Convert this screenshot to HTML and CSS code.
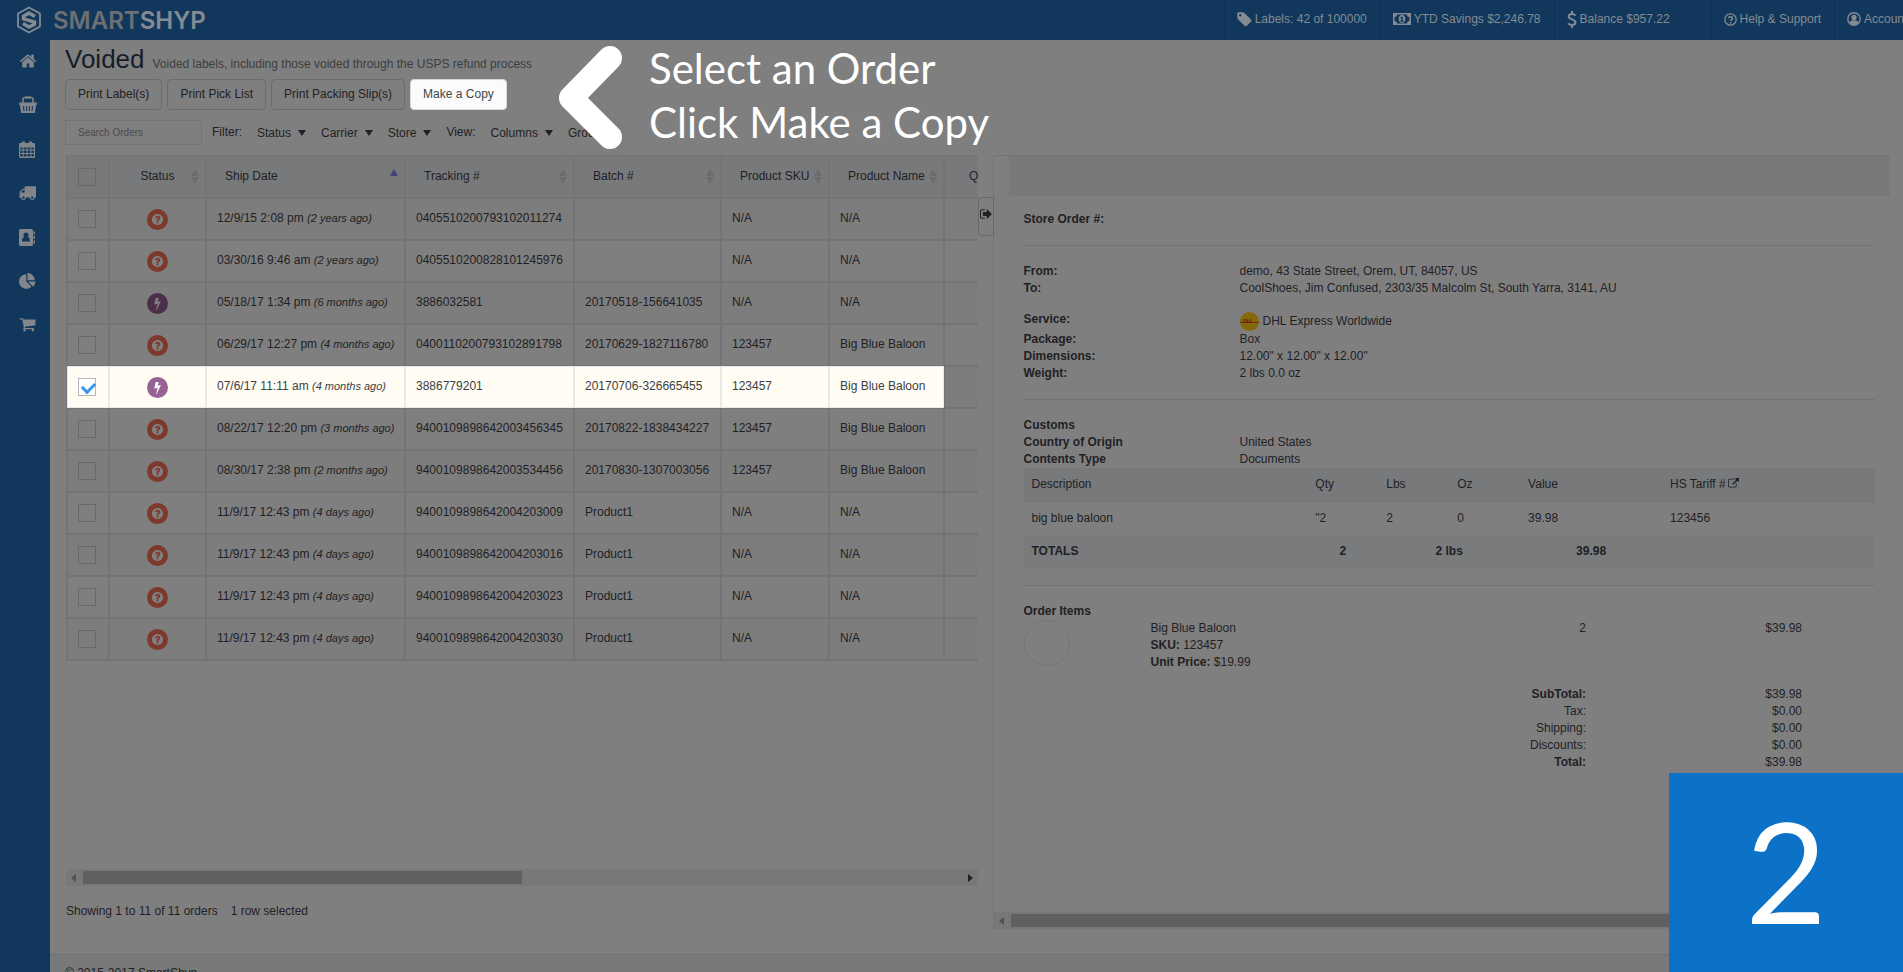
FILE: index.html
```html
<!DOCTYPE html>
<html lang="en">
<head>
    <meta charset="UTF-8">
    <meta name="viewport" content="width=device-width, initial-scale=1.0">
    <title>SmartShyp - Voided</title>
    <link rel="stylesheet" href="styles.css">
</head>
<body>

    <!-- Shared icons -->
    <svg class="symbols" aria-hidden="true">
        <symbol id="question" viewBox="0 0 1792 1792"><path d="M1024 1376v-192q0-14-9-23t-23-9h-192q-14 0-23 9t-9 23v192q0 14 9 23t23 9h192q14 0 23-9t9-23zm256-672q0-88-55.5-163t-138.5-116-170-41q-243 0-371 213-15 24 8 42l132 100q7 6 19 6 16 0 25-12 53-68 86-92 34-24 86-24 48 0 85.5 26t37.5 59q0 38-20 61t-68 45q-63 28-115.5 86.5t-52.5 125.5v36q0 14 9 23t23 9h192q14 0 23-9t9-23q0-19 21.5-49.5t54.5-49.5q32-18 49-28.5t46-35 44.5-48 28-60.5 12.5-81zm384 192q0 209-103 385.5t-279.5 279.5-385.5 103-385.5-103-279.5-279.5-103-385.5 103-385.5 279.5-279.5 385.5-103 385.5 103 279.5 279.5 103 385.5z"/></symbol>
        <symbol id="bolt" viewBox="0 0 1792 1792"><path d="M1333 566q18 20 7 44l-540 1157q-13 25-42 25-4 0-14-2-17-5-25.5-19t-4.5-30l197-808-406 101q-4 1-12 1-18 0-31-11-18-15-13-39l201-825q4-14 16-23t28-9h328q19 0 32 12.5t13 29.5q0 8-5 18l-171 463 396-98q8-2 12-2 19 0 34 15z"/></symbol>
    </svg>

    <!-- Top bar -->
    <header class="topbar">
        <a class="logo" href="#">
            <svg width="26" height="28" viewBox="0 0 26 28" fill="none" stroke="currentColor">
                <path d="M13 1.5 24 7.5v13L13 26.5 2 20.500v-13z" stroke-width="1.800" stroke-linejoin="round"/>
                <path d="M19 10.500 13 7 7.500 10.200v2.600l11 3.200v2.300L13 21l-6-3.500" stroke-width="3.400"/>
            </svg>
            <span class="logo-text">SMART<b>SHYP</b></span>
        </a>
        <nav class="topnav">
            <a href="#">
                <svg width="15" height="15" viewBox="100 100 1600 1600"><path d="M576 448q0-53-37.500-90.500t-90.500-37.500-90.500 37.500-37.500 90.500 37.500 90.500 90.500 37.500 90.500-37.500 37.500-90.500zm1067 576q0 53-37 90l-491 492q-39 37-91 37-53 0-90-37l-715-716q-38-37-64.500-101t-26.500-117v-416q0-52 38-90t90-38h416q53 0 117 26.500t102 64.500l715 714q37 39 37 91z"/></svg>
                Labels: 42 of 100000
            </a>
            <a href="#">
                <svg width="18" height="12" viewBox="0 0 18 12"><path fill-rule="evenodd" d="M0 0h18v12H0zM4 1.500A2.500 2.500 0 0 1 1.500 4v4A2.500 2.500 0 0 1 4 10.500h10A2.500 2.500 0 0 1 16.500 8V4A2.500 2.500 0 0 1 14 1.500zM9 2c2.200 0 3.300 1.800 3.300 4S11.200 10 9 10 5.700 8.200 5.700 6 6.800 2 9 2zm-.6 1.700-1.400 1 .5.8.7-.4v2.600H7.200v1h3.600v-1h-1v-4z"/></svg>
                YTD Savings $2,246.78
            </a>
            <a class="balance" href="#">
                <svg width="10" height="17" viewBox="0 0 10 17" fill="none" stroke="currentColor" stroke-width="2"><path d="M8.500 4.600C7.500 3.400 6 3 5 3 3 3 1.700 4 1.700 5.500c0 3.600 6.800 2.200 6.800 5.800 0 1.700-1.500 2.700-3.500 2.700-1.500 0-2.900-.6-3.800-1.700M5 0v3m0 11v3"/></svg>
                Balance $957.22
            </a>
            <a href="#">
                <svg width="13" height="13" viewBox="0 0 13 13" fill="none" stroke="currentColor"><circle cx="6.500" cy="6.500" r="5.700" stroke-width="1.300"/><path d="M4.500 5.200c.2-2 4-2 4 0 0 1.400-1.900 1.300-1.900 2.800m0 1v1.400" stroke-width="1.500"/></svg>
                Help &amp; Support
            </a>
            <a class="account" href="#">
                <svg width="14" height="14" viewBox="0 0 14 14"><circle cx="7" cy="7" r="6.200" fill="none" stroke="currentColor" stroke-width="1.400"/><circle cx="7" cy="5.400" r="2.600"/><path d="M2.500 11C3 8.800 4.500 8.300 7 8.300s4 .5 4.500 2.700L9 13H5z"/></svg>
                Account
            </a>
        </nav>
    </header>

    <div class="layout">
        <!-- Side menu -->
        <nav class="sidebar">
            <a href="#" aria-label="Home"><svg width="18" height="18" viewBox="0 0 1792 1792"><path d="M1472 992v480q0 26-19 45t-45 19h-384v-384h-256v384h-384q-26 0-45-19t-19-45v-480q0-1 .5-3t.5-3l575-474 575 474q1 2 1 6zm223-69l-62 74q-8 9-21 11h-3q-13 0-21-7l-692-577-692 577q-12 8-24 7-13-2-21-11l-62-74q-8-10-7-23.500t11-21.500l719-599q32-26 76-26t76 26l244 204v-195q0-14 9-23t23-9h192q14 0 23 9t9 23v408l219 182q10 8 11 21.500t-7 23.500z"/></svg></a>
            <a href="#" aria-label="Orders"><svg width="18" height="18" viewBox="0 0 18 18"><path d="M4 8V3.500Q4 1.500 6 1.500h6q2 0 2 2V8" fill="none" stroke="currentColor" stroke-width="1.500"/><path d="M6 .5h6v2H6z"/><path fill-rule="evenodd" d="M0 6.500h18v2.200h-.8L15.800 17H2.200L.8 8.700H0zM4 10l.5 5h1L5 10zm3 0 .2 5h1L8 10zm3 0-.2 5h1l.2-5zm3 0-.5 5h1l.5-5z"/></svg></a>
            <a href="#" aria-label="Calendar"><svg width="16" height="17" viewBox="0 0 16 17"><path fill-rule="evenodd" d="M1 2h2V.5h3V2h4V.5h3V2h2q1 0 1 1v13q0 1-1 1H1q-1 0-1-1V3q0-1 1-1zm.2 4.500v2h2.400v-2zm3.400 0v2h2.900v-2zm3.900 0v2h2.900v-2zm3.900 0v2h2.400v-2zM1.200 9.500V12h2.400V9.500zm3.400 0V12h2.900V9.500zm3.900 0V12h2.900V9.500zm3.900 0V12h2.400V9.500zM1.200 13v2.500h2.400V13zm3.400 0v2.500h2.900V13zm3.900 0v2.500h2.900V13zm3.900 0v2.500h2.400V13z"/></svg></a>
            <a href="#" aria-label="Shipping"><svg width="17" height="17" viewBox="64 128 1728 1728"><path d="M640 1408q0-52-38-90t-90-38-90 38-38 90 38 90 90 38 90-38 38-90zm-384-512h384v-256h-158q-13 0-22 9l-195 195q-9 9-9 22v30zm1280 512q0-52-38-90t-90-38-90 38-38 90 38 90 90 38 90-38 38-90zm256-1088v1024q0 15-4 26.500t-13.500 18.500-16.500 11.500-23.500 6-22.500 2-25.500 0-22.500-.5q0 106-75 181t-181 75-181-75-75-181h-384q0 106-75 181t-181 75-181-75-75-181h-64q-3 0-22.500.5t-25.500 0-22.500-2-23.500-6-16.500-11.500-13.500-18.500-4-26.500q0-26 19-45t45-19v-320q0-8-.5-35t0-38 2.500-34.500 6.500-37 14-30.500 22.500-30l198-198q19-19 50.500-32t58.500-13h160v-192q0-26 19-45t45-19h1024q26 0 45 19t19 45z"/></svg></a>
            <a href="#" aria-label="Contacts"><svg width="16" height="17" viewBox="0 0 16 17"><path fill-rule="evenodd" d="M1.500 0h11Q14 0 14 1.500v14q0 1.500-1.500 1.500h-11Q0 17 0 15.500v-14Q0 0 1.500 0zM7 3.500a2.500 2.500 0 0 0-1.700 4.400C3.800 8.300 3 9.500 3 12.500h8c0-3-.8-4.200-2.300-4.600A2.500 2.500 0 0 0 7 3.500z"/><path d="M14.500 2.500H16v3h-1.500zm0 4.500H16v3h-1.500zm0 4.500H16v3h-1.500z"/></svg></a>
            <a href="#" aria-label="Reports"><svg width="17" height="17" viewBox="0 0 1792 1792"><path d="M768 890l546 546q-106 108-247.500 168t-298.500 60q-209 0-385.500-103t-279.500-279.500-103-385.500 103-385.500 279.500-279.500 385.500-103v762zm187 6h773q0 157-60 298.500t-168 247.500zm709-128h-768v-768q209 0 385.500 103t279.500 279.500 103 385.500z"/></svg></a>
            <a href="#" aria-label="Cart"><svg width="17" height="17" viewBox="0 128 1792 1792"><path d="M704 1536q0 52-38 90t-90 38-90-38-38-90 38-90 90-38 90 38 38 90zm896 0q0 52-38 90t-90 38-90-38-38-90 38-90 90-38 90 38 38 90zm128-1088v512q0 24-16.500 42.500t-40.500 21.500l-1044 122q13 60 13 70 0 16-24 64h920q26 0 45 19t19 45-19 45-45 19h-1024q-26 0-45-19t-19-45q0-11 8-31.500t16-36 21.500-40 15.500-29.500l-177-823h-204q-26 0-45-19t-19-45 19-45 45-19h256q16 0 28.500 6.500t19.500 15.500 13 24.500 8 26 5.500 29.500 4.500 26h1201q26 0 45 19t19 45z"/></svg></a>
        </nav>

        <div class="page">
            <main class="content">
                <div class="title">
                    <h1>Voided</h1>
                    <small>Voided labels, including those voided through the USPS refund process</small>
                </div>

                <div class="actions">
                    <button type="button">Print Label(s)</button>
                    <button type="button">Print Pick List</button>
                    <button type="button">Print Packing Slip(s)</button>
                    <button type="button" class="lit">Make a Copy</button>
                </div>

                <div class="filters">
                    <input type="text" placeholder="Search Orders" aria-label="Search Orders">
                    <span>Filter:</span>
                    <button type="button">Status</button>
                    <button type="button">Carrier</button>
                    <button type="button">Store</button>
                    <span>View:</span>
                    <button type="button">Columns</button>
                    <button type="button">Group</button>
                </div>

                <div class="columns">
                    <!-- Orders -->
                    <section class="orders">
                        <div class="table-wrap">
                            <table class="orders-table">
                                <colgroup>
                                    <col class="c-check"><col class="c-status"><col class="c-date"><col class="c-track"><col class="c-batch"><col class="c-sku"><col class="c-name"><col class="c-qty">
                                </colgroup>
                                <thead>
                                    <tr>
                                        <th class="mid"><input type="checkbox" aria-label="Select all"></th>
                                        <th class="mid sort">Status</th>
                                        <th class="sort asc">Ship Date</th>
                                        <th class="sort">Tracking #</th>
                                        <th class="sort">Batch #</th>
                                        <th class="sort">Product SKU</th>
                                        <th class="sort">Product Name</th>
                                        <th class="qty">Qty</th>
                                    </tr>
                                </thead>
                                <tbody>
                                    <tr>
                                        <td class="mid"><input type="checkbox" aria-label="Select order 1"></td>
                                        <td class="mid"><span class="badge"><svg><use href="#question"/></svg></span></td>
                                        <td>12/9/15 2:08 pm <em>(2 years ago)</em></td><td>0405510200793102011274</td><td></td><td>N/A</td><td>N/A</td><td></td>
                                    </tr>
                                    <tr>
                                        <td class="mid"><input type="checkbox" aria-label="Select order 2"></td>
                                        <td class="mid"><span class="badge"><svg><use href="#question"/></svg></span></td>
                                        <td>03/30/16 9:46 am <em>(2 years ago)</em></td><td>0405510200828101245976</td><td></td><td>N/A</td><td>N/A</td><td></td>
                                    </tr>
                                    <tr>
                                        <td class="mid"><input type="checkbox" aria-label="Select order 3"></td>
                                        <td class="mid"><span class="badge flash"><svg><use href="#bolt"/></svg></span></td>
                                        <td>05/18/17 1:34 pm <em>(6 months ago)</em></td><td>3886032581</td><td>20170518-156641035</td><td>N/A</td><td>N/A</td><td></td>
                                    </tr>
                                    <tr>
                                        <td class="mid"><input type="checkbox" aria-label="Select order 4"></td>
                                        <td class="mid"><span class="badge"><svg><use href="#question"/></svg></span></td>
                                        <td>06/29/17 12:27 pm <em>(4 months ago)</em></td><td>0400110200793102891798</td><td>20170629-1827116780</td><td>123457</td><td>Big Blue Baloon</td><td></td>
                                    </tr>
                                    <tr class="selected">
                                        <td class="mid"><input type="checkbox" aria-label="Select order 5" checked></td>
                                        <td class="mid"><span class="badge flash"><svg><use href="#bolt"/></svg></span></td>
                                        <td>07/6/17 11:11 am <em>(4 months ago)</em></td><td>3886779201</td><td>20170706-326665455</td><td>123457</td><td>Big Blue Baloon</td><td></td>
                                    </tr>
                                    <tr>
                                        <td class="mid"><input type="checkbox" aria-label="Select order 6"></td>
                                        <td class="mid"><span class="badge"><svg><use href="#question"/></svg></span></td>
                                        <td>08/22/17 12:20 pm <em>(3 months ago)</em></td><td>9400109898642003456345</td><td>20170822-1838434227</td><td>123457</td><td>Big Blue Baloon</td><td></td>
                                    </tr>
                                    <tr>
                                        <td class="mid"><input type="checkbox" aria-label="Select order 7"></td>
                                        <td class="mid"><span class="badge"><svg><use href="#question"/></svg></span></td>
                                        <td>08/30/17 2:38 pm <em>(2 months ago)</em></td><td>9400109898642003534456</td><td>20170830-1307003056</td><td>123457</td><td>Big Blue Baloon</td><td></td>
                                    </tr>
                                    <tr>
                                        <td class="mid"><input type="checkbox" aria-label="Select order 8"></td>
                                        <td class="mid"><span class="badge"><svg><use href="#question"/></svg></span></td>
                                        <td>11/9/17 12:43 pm <em>(4 days ago)</em></td><td>9400109898642004203009</td><td>Product1</td><td>N/A</td><td>N/A</td><td></td>
                                    </tr>
                                    <tr>
                                        <td class="mid"><input type="checkbox" aria-label="Select order 9"></td>
                                        <td class="mid"><span class="badge"><svg><use href="#question"/></svg></span></td>
                                        <td>11/9/17 12:43 pm <em>(4 days ago)</em></td><td>9400109898642004203016</td><td>Product1</td><td>N/A</td><td>N/A</td><td></td>
                                    </tr>
                                    <tr>
                                        <td class="mid"><input type="checkbox" aria-label="Select order 10"></td>
                                        <td class="mid"><span class="badge"><svg><use href="#question"/></svg></span></td>
                                        <td>11/9/17 12:43 pm <em>(4 days ago)</em></td><td>9400109898642004203023</td><td>Product1</td><td>N/A</td><td>N/A</td><td></td>
                                    </tr>
                                    <tr>
                                        <td class="mid"><input type="checkbox" aria-label="Select order 11"></td>
                                        <td class="mid"><span class="badge"><svg><use href="#question"/></svg></span></td>
                                        <td>11/9/17 12:43 pm <em>(4 days ago)</em></td><td>9400109898642004203030</td><td>Product1</td><td>N/A</td><td>N/A</td><td></td>
                                    </tr>
                                </tbody>
                            </table>
                        </div>
                        <div class="scrollbar"><i class="arrow left"></i><div class="track"><div class="thumb half"></div></div><i class="arrow right"></i></div>
                        <p class="info"><span>Showing 1 to 11 of 11 orders</span><span>1 row selected</span></p>
                    </section>

                    <!-- Order details -->
                    <section class="side">
                        <button type="button" class="toggle" aria-label="Collapse details"><svg width="12" height="12" viewBox="64 128 1600 1536"><path d="M704 1440q0 4 1 20t.5 26.500-3 23.500-10 19.500-20.500 6.500h-320q-119 0-203.500-84.500t-84.500-203.500v-704q0-119 84.500-203.500t203.500-84.500h320q13 0 22.500 9.500t9.500 22.500q0 4 1 20t.5 26.500-3 23.500-10 19.500-20.500 6.500h-320q-66 0-113 47t-47 113v704q0 66 47 113t113 47h312l11.500 1 11.500 3 8 5.500 7 9 2 13.500zm928-544q0 26-19 45l-544 544q-19 19-45 19t-45-19-19-45v-288h-448q-26 0-45-19t-19-45v-384q0-26 19-45t45-19h448v-288q0-26 19-45t45-19 45 19l544 544q19 19 19 45z"/></svg></button>
                        <div class="details">
                            <div class="bar"></div>
                            <div class="details-body">
                                <p class="store"><b>Store Order #:</b></p>
                                <hr>
                                <dl>
                                    <dt>From:</dt><dd>demo, 43 State Street, Orem, UT, 84057, US</dd>
                                    <dt>To:</dt><dd>CoolShoes, Jim Confused, 2303/35 Malcolm St, South Yarra, 3141, AU</dd>
                                </dl>
                                <dl class="service">
                                    <dt>Service:</dt>
                                    <dd class="carrier">
                                        <svg width="19" height="19" viewBox="0 0 19 19"><circle cx="9.500" cy="9.500" r="9.500" fill="#86680c"/><path d="M0 10.500h19" stroke="#7c2a12"/><text x="3" y="11" font-size="5" font-weight="bold" font-style="italic" fill="#72130b">DHL</text></svg>
                                        DHL Express Worldwide
                                    </dd>
                                    <dt>Package:</dt><dd>Box</dd>
                                    <dt>Dimensions:</dt><dd>12.00" x 12.00" x 12.00"</dd>
                                    <dt>Weight:</dt><dd>2 lbs 0.0 oz</dd>
                                </dl>
                                <hr>
                                <dl class="customs">
                                    <dt>Customs</dt><dd></dd>
                                    <dt>Country of Origin</dt><dd>United States</dd>
                                    <dt>Contents Type</dt><dd>Documents</dd>
                                </dl>
                                <table class="customs-table">
                                    <colgroup><col class="w4"><col class="w1"><col class="w1"><col class="w1"><col class="w2"><col class="w3"></colgroup>
                                    <thead>
                                        <tr>
                                            <th>Description</th><th>Qty</th><th>Lbs</th><th>Oz</th><th>Value</th>
                                            <th>HS Tariff # <svg width="11" height="11" viewBox="0 0 1792 1792"><path d="M1408 928v320q0 119-84.500 203.500t-203.500 84.500h-832q-119 0-203.500-84.500t-84.500-203.500v-832q0-119 84.500-203.500t203.500-84.500h704q14 0 23 9t9 23v64q0 14-9 23t-23 9h-704q-66 0-113 47t-47 113v832q0 66 47 113t113 47h832q66 0 113-47t47-113v-320q0-14 9-23t23-9h64q14 0 23 9t9 23zm384-864v512q0 26-19 45t-45 19-45-19l-176-176-652 652q-10 10-23 10t-23-10l-114-114q-10-10-10-23t10-23l652-652-176-176q-19-19-19-45t19-45 45-19h512q26 0 45 19t19 45z"/></svg></th>
                                        </tr>
                                    </thead>
                                    <tbody>
                                        <tr><td>big blue baloon</td><td>"2</td><td>2</td><td>0</td><td>39.98</td><td>123456</td></tr>
                                    </tbody>
                                    <tfoot>
                                        <tr><td>TOTALS</td><td class="sum">2</td><td class="sum" colspan="2">2 lbs</td><td class="sum">39.98</td><td></td></tr>
                                    </tfoot>
                                </table>
                                <hr>
                                <p class="items-title"><b>Order Items</b></p>
                                <div class="item">
                                    <span class="thumbnail"></span>
                                    <div>Big Blue Baloon<br><b>SKU:</b> 123457<br><b>Unit Price:</b> $19.99</div>
                                    <div class="num">2</div>
                                    <div class="num">$39.98</div>
                                </div>
                                <dl class="totals">
                                    <dt>SubTotal:</dt><dd>$39.98</dd>
                                    <dt class="plain">Tax:</dt><dd>$0.00</dd>
                                    <dt class="plain">Shipping:</dt><dd>$0.00</dd>
                                    <dt class="plain">Discounts:</dt><dd>$0.00</dd>
                                    <dt>Total:</dt><dd>$39.98</dd>
                                </dl>
                            </div>
                            <div class="scrollbar"><i class="arrow left"></i><div class="track"><div class="thumb"></div></div><i class="arrow right"></i></div>
                        </div>
                    </section>
                </div>
            </main>
            <footer class="footer">&copy; 2015-2017 SmartShyp</footer>
        </div>
    </div>

    <!-- Tutorial step -->
    <div class="hint">
        <svg width="68" height="112" viewBox="0 0 68 112"><path d="M55 15 16 55l39 39" fill="none" stroke="#fff" stroke-width="24" stroke-linecap="round" stroke-linejoin="round"/></svg>
        <p>Select an Order<br>Click Make a Copy</p>
    </div>
    <div class="step">2</div>

</body>
</html>
```

FILE: styles.css
```css
* {
    box-sizing: border-box;
}

body {
    margin: 0;
    height: 100vh;
    overflow: hidden;
    display: flex;
    flex-direction: column;
    background-color: #7f7f7f;
    color: #1f2124;
    font-family: "Liberation Sans", Arial, sans-serif;
    font-size: 12px;
    line-height: 17px;
}

h1, p, dl, dd {
    margin: 0;
}

svg {
    fill: currentColor;
}

svg[fill="none"] {
    fill: none;
}

button, input {
    font-family: inherit;
    font-size: 12px;
    color: inherit;
}

a {
    color: inherit;
    text-decoration: none;
}

.symbols {
    position: absolute;
    width: 0;
    height: 0;
}

/* Top bar */
.topbar {
    flex: none;
    height: 40px;
    display: flex;
    justify-content: space-between;
    background-color: #11375c;
    color: #858b92;
}

.logo {
    display: flex;
    align-items: center;
    gap: 11px;
    padding-left: 16px;
}

.logo-text {
    font-family: Inter, sans-serif;
    font-size: 24px;
    font-weight: 600;
    color: #6c6f73;
}

.logo-text b {
    font-weight: 600;
    color: #858b92;
}

.topnav {
    display: flex;
}

.topnav a {
    display: flex;
    align-items: center;
    gap: 3px;
    padding: 0 13px 2px 12px;
    border-left: 1px solid #10304f;
    white-space: nowrap;
}

.topnav .balance {
    padding-right: 41px;
}

.topnav .account {
    width: 69px;
    padding-right: 0;
    overflow: hidden;
}

.topnav svg {
    flex: none;
}

/* Side menu */
.layout {
    flex: 1;
    min-height: 0;
    display: flex;
}

.sidebar {
    flex: none;
    width: 50px;
    background-color: #11375c;
    color: #82868a;
}

.sidebar a {
    display: flex;
    align-items: center;
    height: 44px;
    padding: 0 0 2px 19px;
}

.page {
    flex: 1;
    min-width: 0;
    display: flex;
    flex-direction: column;
}

.content {
    flex: 1;
    min-height: 0;
    display: flex;
    flex-direction: column;
    padding: 3px 13px 25px 15px;
}

.title {
    display: flex;
    align-items: baseline;
    gap: 8px;
    height: 36px;
}

.title h1 {
    font-size: 26px;
    font-weight: normal;
    line-height: 32px;
    color: #161d29;
}

.title small {
    font-size: 12px;
    color: #3b3e42;
}

.actions {
    display: flex;
    gap: 5px;
}

.actions button {
    height: 31px;
    padding: 0 12px 2px;
    background-color: #7f7f7f;
    border: 1px solid #6a6c6f;
    border-radius: 4px;
}

.actions .lit {
    background-color: #fbfbfb;
    border-color: #d5d9dd;
    color: #444;
}

.filters {
    display: flex;
    align-items: center;
    gap: 15px;
    height: 25px;
    margin: 10px 0;
}

.filters input {
    width: 137px;
    height: 25px;
    margin-right: -5px;
    padding: 0 12px;
    background: none;
    border: 1px solid #717375;
    border-radius: 0;
    font-size: 10px;
}

.filters input::placeholder {
    color: #4a4b4d;
}

.filters button {
    display: flex;
    align-items: center;
    gap: 7px;
    padding: 0;
    border: 0;
    background: none;
}

.filters button::after {
    content: "";
    border: 4px solid transparent;
    border-top: 6px solid #1f2124;
    border-bottom: 0;
}

/* Orders */
.columns {
    flex: 1;
    min-height: 0;
    display: grid;
    grid-template-columns: minmax(0, 1fr) minmax(0, 1fr);
}

.orders {
    display: flex;
    flex-direction: column;
    min-height: 0;
    padding-left: 1px;
}

.table-wrap {
    flex: 1;
    min-height: 0;
    overflow: hidden;
}

.orders-table {
    width: 1018px;
    table-layout: fixed;
    border: 1px solid #737475;
    border-spacing: 0;
}

.c-check { width: 42px; }
.c-status { width: 97px; }
.c-date { width: 199px; }
.c-track { width: 169px; }
.c-batch { width: 147px; }
.c-sku { width: 108px; }
.c-name { width: 115px; }

.orders-table th, .orders-table td {
    height: 42px;
    padding: 0 0 2px 10px;
    border: 1px solid #737475;
    text-align: left;
    white-space: nowrap;
}

.orders-table th {
    position: relative;
    padding: 0 0 0 18px;
    background-color: #77797b;
    border-top: 0;
    font-weight: normal;
}

.orders-table .mid {
    padding: 0;
    text-align: center;
}

.orders-table .qty {
    padding-left: 24px;
}

.orders-table tbody tr:nth-child(odd) {
    background-color: #7d7d7d;
}

.orders-table em {
    font-size: 11px;
}

.sort::before, .sort::after {
    content: "";
    position: absolute;
    right: 6px;
    border: 4px solid transparent;
}

.sort::before {
    top: 13px;
    border-bottom: 7px solid #6b6c6e;
    border-top: 0;
}

.sort::after {
    top: 21px;
    border-top: 7px solid #6b6c6e;
    border-bottom: 0;
}

.asc::before {
    border-bottom-color: #43437f;
}

.asc::after {
    display: none;
}

.orders-table input {
    position: relative;
    appearance: none;
    display: block;
    width: 18px;
    height: 18px;
    margin: 0 10px;
    border: 1px solid #67696b;
}

.badge {
    display: flex;
    align-items: center;
    justify-content: center;
    width: 21px;
    height: 21px;
    margin: 0 auto;
    border-radius: 50%;
    background-color: #7f382c;
    color: #808080;
}

.badge svg {
    width: 13px;
    height: 13px;
}

.badge.flash {
    background-color: #4c3049;
}

.orders-table tbody .selected {
    background-color: #7f7e77;
}

.selected td:not(:last-child) {
    background-color: #fffcf3;
    border-color: #e8e8e8;
    color: #3c3f44;
}

.selected .badge.flash {
    background-color: #976294;
    color: #fff;
}

.selected input {
    background-color: #fff;
    border-color: #b5b5b5;
}

.selected input::after {
    content: "";
    position: absolute;
    top: 3px;
    left: 3px;
    width: 10px;
    height: 6px;
    border-left: 3px solid #3a95f2;
    border-bottom: 3px solid #3a95f2;
    transform: rotate(-45deg);
}

.scrollbar {
    flex: none;
    display: flex;
    align-items: center;
    justify-content: space-between;
    height: 17px;
    padding: 0 5px;
    background-color: #787878;
}

.track {
    flex: 1;
    margin: 0 7px;
}

.thumb {
    height: 13px;
    background-color: #606060;
}

.thumb.half {
    width: 50%;
}

.arrow {
    border: 4px solid transparent;
}

.arrow.left {
    border-right: 5px solid #505050;
    border-left: 0;
}

.arrow.right {
    border-left: 5px solid #222;
    border-right: 0;
}

.info {
    display: flex;
    gap: 13px;
    height: 43px;
    padding-top: 17px;
}

/* Order details */
.side {
    position: relative;
    min-height: 0;
    padding-left: 15px;
}

.toggle {
    position: absolute;
    top: 42px;
    left: 0;
    width: 16px;
    height: 39px;
    padding: 0 0 2px 1px;
    background-color: #7f7f7f;
    border: 1px solid #66686a;
    border-radius: 4px 0 0 4px;
}

.details {
    height: 100%;
    display: flex;
    flex-direction: column;
    border-top: 1px solid #737475;
    border-left: 1px solid #737475;
}

.bar {
    flex: none;
    height: 40px;
    margin-left: 15px;
    background-color: #77797b;
}

.details-body {
    flex: 1;
    min-height: 0;
    padding: 15px 15px 0 30px;
}

.details-body hr {
    height: 1px;
    margin: 0;
    border: 0;
    background-color: #717274;
}

.store {
    height: 34px;
}

.details-body dl {
    display: grid;
    grid-template-columns: 216px 1fr;
    padding-top: 17px;
}

.details-body dt {
    font-weight: bold;
}

.details-body .service {
    padding: 14px 0 17px;
}

.carrier {
    display: flex;
    align-items: center;
    gap: 4px;
    height: 20px;
}

.customs-table {
    width: 100%;
    margin-bottom: 17px;
    table-layout: fixed;
    border-spacing: 0;
}

.w4 { width: 33.33%; }
.w3 { width: 25%; }
.w2 { width: 16.67%; }
.w1 { width: 8.33%; }

.customs-table th, .customs-table td {
    height: 33px;
    padding: 0 8px;
    font-weight: normal;
    text-align: left;
}

.customs-table th {
    height: 34px;
    background-color: #77797b;
    border-bottom: 1px solid #707274;
}

.customs-table th svg {
    vertical-align: -1px;
    margin-left: -1px;
}

.customs-table tfoot td {
    background-color: #7a7b7c;
    font-weight: bold;
}

.customs-table .sum {
    text-align: center;
}

.items-title {
    padding-top: 17px;
}

.item {
    display: grid;
    grid-template-columns: 127px 1fr 100px 216px;
    padding-right: 73px;
}

.thumbnail {
    width: 46px;
    height: 46px;
    border: 1px solid #747577;
    border-radius: 50%;
}

.num {
    text-align: right;
}

.details-body .totals {
    grid-template-columns: 1fr 216px;
    padding: 15px 73px 0 0;
    text-align: right;
}

.totals .plain {
    font-weight: normal;
}

.footer {
    flex: none;
    height: 18px;
    padding: 10px 15px 0;
    background-color: #77797b;
    border-top: 1px solid #6d6f71;
    overflow: hidden;
}

/* Tutorial step */
.hint {
    position: absolute;
    top: 41px;
    left: 555px;
    display: flex;
    gap: 26px;
    color: #fff;
    font-family: Lato, sans-serif;
    font-size: 42px;
    line-height: 54px;
    white-space: nowrap;
}

.hint svg {
    margin-top: 2px;
    background: repeating-linear-gradient(45deg, rgba(0, 0, 0, 0.02) 0 2px, transparent 2px 6px);
}

.step {
    position: absolute;
    right: 0;
    bottom: 0;
    width: 234px;
    height: 199px;
    background-color: #0c72c8;
    color: #fff;
    font-family: Lato, sans-serif;
    font-size: 140px;
    line-height: 194px;
    text-align: center;
}
```
